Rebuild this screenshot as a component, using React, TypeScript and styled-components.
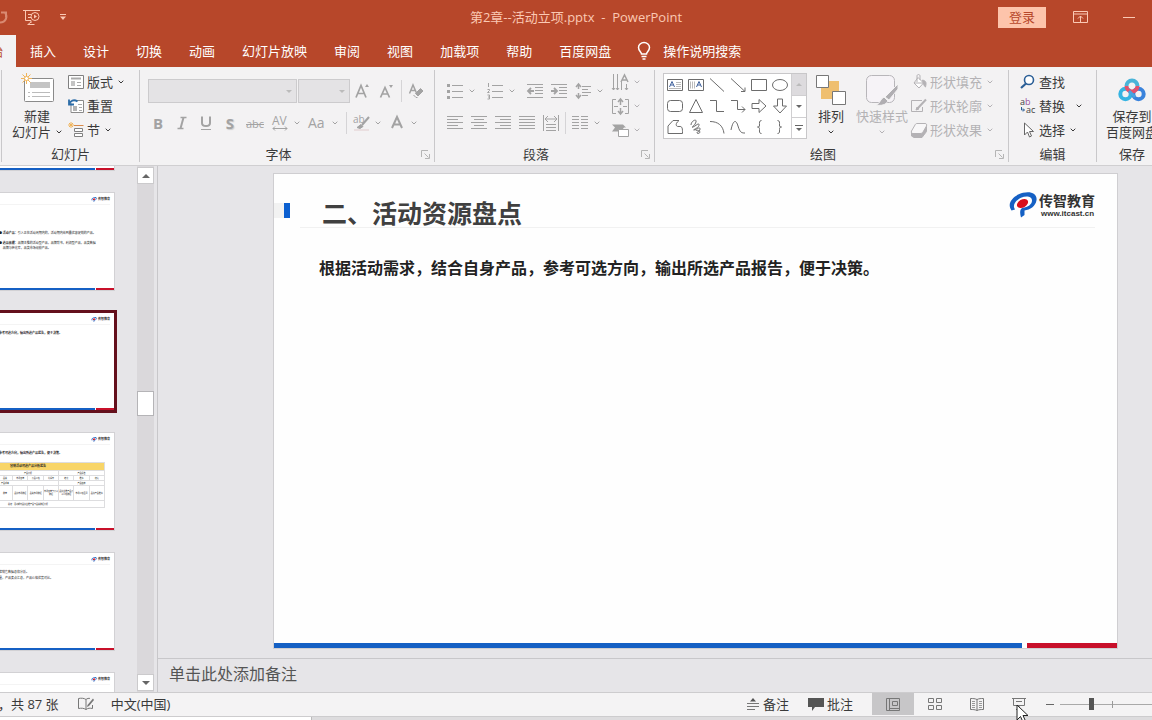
import React from 'react';
import styled, { createGlobalStyle, css } from 'styled-components';

const GlobalStyle = createGlobalStyle`
  * { box-sizing: border-box; }
  body { margin: 0; overflow: hidden; }
  button, select, textarea, input {
    font: inherit; color: inherit; border: 0; padding: 0; margin: 0;
    background: transparent; border-radius: 0; outline: 0;
  }
  svg { display: block; flex: none; overflow: visible; }
`;

const brand = '#b7472a';
const ink = '#3a3a3a';
const faded = '#a3a3a3';

const Window = styled.div`
  height: 100vh;
  display: flex;
  flex-direction: column;
  overflow: hidden;
  background: #e6e5e8;
  color: ${ink};
  font: 13px/16px "Open Sans", "Noto Sans CJK SC", sans-serif;
`;

/* ---------- title bar ---------- */

const TitleBar = styled.header`
  flex: none;
  height: 34px;
  display: grid;
  grid-template-columns: 1fr auto 1fr;
  align-items: center;
  background: ${brand};
  color: #fbc9b4;
`;
const QuickAccess = styled.div`
  display: flex;
  align-items: center;
  gap: 15px;
  margin-left: -8px;
`;
const PlainButton = styled.button`
  display: flex;
  align-items: center;
  justify-content: center;
`;
const DocumentTitle = styled.h1`
  margin: 0;
  font-size: 13px;
  font-weight: 400;
  white-space: pre;
`;
const WindowControls = styled.div`
  display: flex;
  align-items: center;
  justify-content: flex-end;
  padding-right: 15px;
`;
const LoginButton = styled.button`
  width: 48px;
  height: 21px;
  margin-right: 26px;
  background: #fdc4ab;
  color: ${brand};
`;
const WindowButton = styled(PlainButton)`
  width: 16px;
  & + & { margin-left: 33px; }
`;

/* ---------- tabs ---------- */

const TabStrip = styled.nav`
  flex: none;
  height: 33px;
  display: flex;
  gap: 1px;
  padding-top: 1px;
  margin-left: -36px;
  background: ${brand};
  color: #fff;
`;
const Tab = styled.button<{ $active?: boolean }>`
  flex: none;
  padding: 0 13px;
  white-space: nowrap;
  ${p => p.$active && css`background: #f3f2f3; color: ${brand};`}
`;
const TellMe = styled.button`
  display: flex;
  align-items: center;
  gap: 12px;
  margin-left: 12px;
  white-space: nowrap;
`;
const TabBack = styled.div`
  flex: none;
  background: ${brand};
`;

/* ---------- ribbon ---------- */

const Ribbon = styled.div`
  flex: none;
  height: 99px;
  display: flex;
  padding: 3px 0 3px 1px;
  background: #f3f2f3;
  border-bottom: 1px solid #d0cfd1;
`;
const Group = styled.section<{ $w: number }>`
  flex: none;
  width: ${p => p.$w}px;
  display: flex;
  flex-direction: column;
  border-left: 1px solid #c9c8ca;
`;
const GroupBody = styled.div<{ $pad?: number }>`
  height: 77px;
  display: flex;
  padding-left: ${p => p.$pad ?? 0}px;
`;
const GroupFoot = styled.footer`
  display: flex;
  align-items: center;
  height: 16px;
`;
const GroupName = styled.span`
  flex: 1;
  text-align: center;
`;
const Launcher = styled(PlainButton)`
  width: 17px;
  height: 16px;
`;
const BigButton = styled.button<{ $w: number; $off?: boolean }>`
  flex: none;
  width: ${p => p.$w}px;
  display: flex;
  flex-direction: column;
  align-items: center;
  padding-top: 2px;
  white-space: nowrap;
  color: ${p => (p.$off ? '#b4b2b5' : ink)};
`;
const BigIcon = styled.span`
  display: flex;
  align-items: center;
  height: 36px;
`;
const Line = styled.span`
  display: flex;
  align-items: center;
  justify-content: center;
  gap: 5px;
  height: 16px;
`;
const SmallColumn = styled.div<{ $pad?: number }>`
  flex: none;
  display: flex;
  flex-direction: column;
  align-items: flex-start;
  padding-left: ${p => p.$pad ?? 0}px;
`;
const SmallButton = styled.button<{ $off?: boolean; $wide?: boolean }>`
  display: flex;
  align-items: center;
  gap: 3px;
  height: 24px;
  white-space: nowrap;
  color: ${p => (p.$off ? '#b4b2b5' : ink)};
  & > svg:last-child:not(:first-child) { margin-left: ${p => (p.$wide ? 8 : 2)}px; }
`;
const ToolRows = styled.div`
  flex: none;
  display: flex;
  flex-direction: column;
  gap: 8px;
  padding-top: 9px;
`;
const ToolRow = styled.div<{ $outdent?: boolean }>`
  display: flex;
  align-items: center;
  height: 24px;
  margin-left: ${p => (p.$outdent ? -2 : 0)}px;
  color: ${faded};
`;
const Tool = styled.button<{ $after?: number }>`
  display: flex;
  align-items: center;
  justify-content: center;
  gap: 6px;
  min-width: 24px;
  height: 24px;
  padding: 0 4px;
  margin-right: ${p => p.$after ?? 0}px;
  color: ${faded};
  font-size: 15px;
`;
const ShadowLetter = styled.b`
  text-shadow: 1px 1px 1px #ccc;
`;
const Rule = styled.i`
  width: 1px;
  height: 22px;
  margin: 0 2px;
  background: #d5d4d6;
`;
const ComboBox = styled.span<{ $w: number }>`
  display: flex;
  align-items: center;
  width: ${p => p.$w}px;
  height: 24px;
  margin-right: 1px;
  padding-right: 4px;
  border: 1px solid #cccbcd;
  background: #e4e3e5;
  select { flex: 1; min-width: 0; height: 20px; appearance: none; }
`;
const Gallery = styled.div`
  flex: none;
  display: flex;
  width: 144px;
  height: 66px;
  margin-top: 3px;
  border: 1px solid #c8c7c9;
  background: #fff;
`;
const GalleryGrid = styled.div`
  flex: 1;
  display: grid;
  grid-template-columns: repeat(6, 1fr);
  grid-template-rows: repeat(3, 1fr);
`;
const GalleryScroll = styled.div`
  width: 15px;
  display: grid;
  grid-template-rows: repeat(3, 1fr);
  border-left: 1px solid #d0cfd1;
  button:first-child { background: #dddbde; }
  button + button { border-top: 1px solid #d0cfd1; }
`;

/* ---------- workspace ---------- */

const Workspace = styled.div`
  flex: 1;
  min-height: 0;
  display: flex;
`;
const ThumbPane = styled.aside`
  flex: none;
  width: 137px;
  display: flex;
  flex-direction: column;
  align-items: flex-end;
  gap: 23px;
  padding-right: 23px;
  overflow: hidden;
`;
const Thumb = styled.article<{ $selected?: boolean }>`
  flex: none;
  width: 172px;
  height: 97px;
  display: flex;
  flex-direction: column;
  background: #fff;
  color: #222;
  font-size: 3px;
  line-height: 5px;
  box-shadow: 0 0 0 1px #d2d1d4;
  ${p => p.$selected && css`box-shadow: 0 0 0 3px #64101c;`}
  &:first-child { margin-top: -93px; }
`;
const ThumbHead = styled.div`
  display: flex;
  align-items: flex-start;
  justify-content: flex-end;
  gap: 1px;
  height: 12px;
  margin: 0 4px 0 6px;
  padding-top: 4px;
  border-bottom: 1px solid #f4f4f4;
  font-size: 3px;
  font-weight: 700;
`;
const ThumbBody = styled.div<{ $top: number; $left: number; $bold?: boolean }>`
  flex: 1;
  padding: ${p => p.$top}px 8px 0 ${p => p.$left}px;
  font-weight: ${p => (p.$bold ? 700 : 400)};
  white-space: nowrap;
  p { margin: 0 0 5px; }
`;
const ThumbLine = styled.div`
  padding-left: 6px;
  line-height: 6px;
`;
const MiniTable = styled.table`
  width: 154px;
  margin: 6px 0 0;
  border-collapse: collapse;
  table-layout: fixed;
  font-size: 2px;
  line-height: 3px;
  font-weight: 400;
  text-align: center;
  th, td { padding: 0; height: 5px; border: 1px solid #dddddf; white-space: normal; overflow: hidden; }
  th { background: #f8d568; height: 8px; font-size: 3px; }
  tr:nth-child(5) td { height: 15px; }
  tr:nth-child(6) td { height: 7px; }
`;
const BrandBar = styled.div<{ $h: number; $gap: number }>`
  flex: none;
  display: flex;
  gap: ${p => p.$gap}px;
  height: ${p => p.$h}px;
  &::before { content: ''; flex: 748; background: #1560c4; }
  &::after { content: ''; flex: 90; background: #c8102a; }
`;
const Scrollbar = styled.div`
  flex: none;
  width: 17px;
  display: flex;
  flex-direction: column;
  padding: 1px 0;
  background: #dad8db;
`;
const ScrollButton = styled(PlainButton)`
  flex: none;
  height: 17px;
  border: 1px solid #cbcacc;
  background: #fff;
`;
const ScrollGap = styled.i<{ $grow: number }>`
  flex: ${p => p.$grow} 0 0;
`;
const ScrollThumb = styled.i`
  flex: none;
  height: 25px;
  border: 1px solid #b5b4b7;
  background: #fff;
`;
const Editor = styled.main`
  flex: 1;
  min-width: 0;
  display: flex;
  flex-direction: column;
  margin-left: 3px;
  border-left: 1px solid #c8c7ca;
`;
const Stage = styled.div`
  flex: 1;
  min-height: 0;
  display: flex;
  padding: 8px 35px 10px 116px;
`;
const Slide = styled.article`
  flex: 1;
  display: flex;
  flex-direction: column;
  background: #fefefe;
  box-shadow: 0 0 0 1px #cfced1;
`;
const SlideHead = styled.div`
  display: flex;
  align-items: flex-start;
  padding: 17px 22px 0 0;
`;
const Marker = styled.i`
  width: 16px;
  height: 15px;
  margin-top: 12px;
  border-left: 10px solid #f2f2f2;
  background: #0b5fd0;
`;
const SlideTitle = styled.h2`
  flex: 1;
  margin: 0 0 0 10px;
  padding: 5px 0 0 22px;
  font-size: 25px;
  line-height: 34px;
  font-weight: 700;
  color: #404040;
`;
const Logo = styled.div`
  display: flex;
  gap: 2px;
  padding-top: 1px;
`;
const LogoText = styled.div`
  display: flex;
  flex-direction: column;
  color: #333;
  strong { font-size: 14px; line-height: 18px; }
  small { padding-left: 2px; font: 700 8px/8px "Liberation Sans", sans-serif; }
`;
const HeadRule = styled.hr`
  height: 1px;
  width: auto;
  margin: -3px 22px 0 26px;
  border: 0;
  background: #f1f1f1;
`;
const SlideText = styled.p`
  flex: 1;
  margin: 0;
  padding: 28px 0 0 45px;
  font-size: 16px;
  line-height: 24px;
  font-weight: 700;
  color: #222;
  white-space: nowrap;
`;
const Notes = styled.textarea`
  flex: none;
  height: 34px;
  display: block;
  padding: 3px 11px;
  border-top: 1px solid #c8c7ca;
  resize: none;
  font-size: 16px;
  line-height: 24px;
  color: #555;
  overflow: hidden;
  &::placeholder { color: #555; }
`;

/* ---------- status bar ---------- */

const StatusBar = styled.footer`
  flex: none;
  height: 25px;
  display: flex;
  align-items: stretch;
  padding-bottom: 1px;
  border-top: 1px solid #cdccce;
  border-bottom: 1px solid #cdccce;
  background: #f4f3f4;
`;
const StatusText = styled.span`
  display: flex;
  align-items: center;
  white-space: pre;
  &:first-child { margin-left: -2px; }
`;
const StatusButton = styled.button`
  display: flex;
  align-items: center;
  gap: 3px;
  margin-right: 19px;
  white-space: nowrap;
`;
const ProofButton = styled(PlainButton)`
  margin: 0 17px 0 19px;
`;
const ViewButton = styled(PlainButton)<{ $active?: boolean }>`
  width: 42px;
  background: ${p => (p.$active ? '#c7c6c8' : 'transparent')};
`;
const Spacer = styled.i`
  flex: 1;
`;
const ZoomOut = styled(PlainButton)`
  width: 20px;
`;
const ZoomSlider = styled.input`
  appearance: none;
  width: 92px;
  background:
    linear-gradient(#999, #999) 52px 50% / 1px 7px no-repeat,
    linear-gradient(#a9a9a9, #a9a9a9) 0 50% / 100% 1px no-repeat;
  &::-webkit-slider-thumb {
    appearance: none;
    width: 5px;
    height: 12px;
    background: #555;
  }
`;
const Underlay = styled.div`
  flex: none;
  height: 3px;
  background: #dddcde;
  &::before {
    content: '';
    display: block;
    width: 27%;
    height: 3px;
    border-right: 1px solid #bbb;
    background: #fff;
  }
`;
const PointerHost = styled.span`
  position: relative;
  display: flex;
`;
const Pointer = styled.svg`
  position: absolute;
  left: 18px;
  top: 11px;
`;

/* ---------- icons ---------- */

type IconProps = { w?: number; h?: number; c?: string; sw?: number; children: React.ReactNode };
const Icon = ({ w = 16, h = 16, c = 'currentColor', sw = 1, children }: IconProps) => (
  <svg width={w} height={h} viewBox={`0 0 ${w} ${h}`} fill="none" stroke={c} strokeWidth={sw} aria-hidden="true">
    {children}
  </svg>
);
const Glyphs = ({ x = 0, y, size, fill = 'currentColor', children }: { x?: number; y: number; size: number; fill?: string; children: React.ReactNode }) => (
  <text x={x} y={y} fontSize={size} fill={fill} stroke="none" fontFamily="Open Sans">{children}</text>
);
const Chevron = () => (
  <Icon w={6} h={6}><path d="M.7 1.7 3 4 5.300 1.700" /></Icon>
);
const Triangle = ({ up, c = '#666', w = 8 }: { up?: boolean; c?: string; w?: number }) => (
  <svg width={w} height={w / 2} viewBox="0 0 8 4" fill={c} aria-hidden="true">
    <path d={up ? 'M0 4h8L4 0z' : 'M0 0h8L4 4z'} />
  </svg>
);
const LaunchIcon = () => (
  <Icon w={9} h={9} c="#b5b5b5"><path d="M.5 7V.5H7M3.500 3.500l4 4M8.500 4v4.500H4" /></Icon>
);
const Lines = ({ rows }: { rows: [number, number][] }) => (
  <Icon>{rows.map(([a, b], i) => <path key={i} d={`M${a} ${i * 3 + 1.5}H${b}`} />)}</Icon>
);
const LogoMark = ({ w, h }: { w: number; h: number }) => (
  <svg width={w} height={h} viewBox="0 0 29 26" aria-hidden="true">
    <path d="M3.500 18.500C-2 11 6 3 15 .8c8-2 14.500 1 13.500 7.500-1 6-6.500 9.700-12 10.200v4.500l-3.500 2.500c-1.500-5-1-8.500 1.500-9.700 5.500-.5 9.500-3.500 9.500-7.300 0-4.500-6-5-11-2.800C7.500 8.500 4 13.500 7 17.500z" fill="#1560c4" />
    <ellipse cx="14.500" cy="11.500" rx="6" ry="4" transform="rotate(-30 14.500 11.500)" fill="#d80f1c" />
  </svg>
);

const galleryShapes: { name: string; art: React.ReactNode }[] = [
  { name: '文本框', art: <><path d="M.5 2.500h15v11H.5z" /><path d="M2.500 10 5 4.500 7.500 10M3.500 8h3" stroke="#3d5f9b" /><path d="M9 5.500h5M9 7.500h5M9 9.500h5M2 11.500h12" stroke="#bbb" /></> },
  { name: '竖排文本框', art: <><path d="M.5 2.500h15v11H.5z" /><path d="M8.500 10 11 4.500 13.500 10M9.500 8h3" stroke="#3d5f9b" /><path d="M2.500 4.500v7M4.500 4.500v7M6.500 4.500v7" stroke="#bbb" /></> },
  { name: '直线', art: <path d="M1 1.500 15 14.500" /> },
  { name: '箭头', art: <path d="M1 1.500 15 14.500M15 10.500v4h-4" /> },
  { name: '矩形', art: <path d="M.5 2.500h15v11H.5z" /> },
  { name: '椭圆', art: <ellipse cx="8" cy="8" rx="7.500" ry="5.500" /> },
  { name: '圆角矩形', art: <rect x=".5" y="2.500" width="15" height="11" rx="3" /> },
  { name: '三角形', art: <path d="M8 1.500 14.500 14.500h-13z" /> },
  { name: '肘形连接符', art: <path d="M1 2.500h6.500v11H15" /> },
  { name: '肘形箭头', art: <path d="M1 2.500h6.500v9H15M12 8.500l3 3-3 3" /> },
  { name: '右箭头', art: <path d="M1 5.500h7v-4L15 8l-7 6.500v-4H1z" /> },
  { name: '下箭头', art: <path d="M5.500 1v7h-4L8 15l6.500-7h-4V1z" /> },
  { name: '任意多边形', art: <path d="M1 14.500V7l5-5.500h6C8 4.500 8.500 8 12 7.500c3.500-.5 3.500 2 3.500 7z" /> },
  { name: '自由曲线', art: <path d="M3 6c0-4 6-7 5-3S2 9 5 8s6-5 6-2-7 5-5 5 6-4 6-1-4 3-3 4 3 0 3-1-4-3-4-1" /> },
  { name: '弧形', art: <path d="M1 2.500c8 0 13 4 14 12" /> },
  { name: '曲线', art: <path d="M1 11C3 1 6 0 8 7s4 7 7 7" /> },
  { name: '左大括号', art: <path d="M10.500 1.500C8 1.500 8.500 4 8.500 6S8 8 6.500 8c1.500 0 2 .5 2 2.500s-.5 4 2 4" /> },
  { name: '右大括号', art: <path d="M5.500 1.500C8 1.500 7.500 4 7.500 6S8 8 9.500 8c-1.500 0-2 .5-2 2.500s.5 4-2 4" /> },
];

const GroupFooter = ({ name, launch }: { name: string; launch?: boolean }) => (
  <GroupFoot>
    <GroupName>{name}</GroupName>
    {launch && <Launcher aria-label={`${name}设置`}><LaunchIcon /></Launcher>}
  </GroupFoot>
);

const SlidesGroup = () => (
  <Group $w={138}>
    <GroupBody $pad={7}>
      <BigButton $w={56}>
        <BigIcon>
          <Icon w={32} h={36} c="#8a8a8a">
            <rect x="3.500" y="6.500" width="29" height="23" rx="1" fill="#fff" />
            <path d="M9 10h20v6H9z" fill="#c4c4c4" stroke="none" />
            <path d="M11 20.500h18M11 24.500h18" stroke="#bbb" /><path d="M7 20.500h2M7 24.500h2" stroke="#bbb" />
            <path d="M5.500 1v11M0 6.500h11M1.500 2.500l8 8M9.500 2.500l-8 8" stroke="#f0b45a" />
            <circle cx="5.500" cy="6.500" r="2" fill="#fff" stroke="#f0b45a" />
          </Icon>
        </BigIcon>
        <Line>新建</Line>
        <Line>幻灯片<Chevron /></Line>
      </BigButton>
      <SmallColumn $pad={3}>
        <SmallButton>
          <Icon c="#808080"><path d="M.5 1.500h15v13H.5z" fill="#fff" /><path d="M3 4.500h10" stroke="#aaa" strokeWidth="2" /><path d="M3 7h4v5H3z" fill="#c4c4c4" stroke="none" /><path d="M9 8.500h4M9 11.500h4" stroke="#aaa" /></Icon>
          版式<Chevron />
        </SmallButton>
        <SmallButton>
          <Icon c="#8a8a8a"><path d="M3 5v9.500h12.500v-12H9" fill="#fff" /><path d="M5 8h4v5H5z" fill="#b4b4b4" stroke="none" /><path d="M10 6.500h4M11 9.500h3M11 12.500h3" stroke="#aaa" /><path d="M1 1.500v5h5M1 6.500c1-4 5-5.500 8.500-3" stroke="#2c6da8" strokeWidth="1.800" /></Icon>
          重置
        </SmallButton>
        <SmallButton>
          <Icon c="#808080"><path d="M6 3.500h9.500" stroke="#d88a4a" /><path d="M6.500 6.500h8v3h-8zM6.500 11.500h8v3h-8z" fill="#fff" /><path d="M3 0v6M0 3h6M1 1l4 4M5 1 1 5" stroke="#f0b45a" /></Icon>
          节<Chevron />
        </SmallButton>
      </SmallColumn>
    </GroupBody>
    <GroupFooter name="幻灯片" />
  </Group>
);

const FontGroup = () => (
  <Group $w={295}>
    <GroupBody $pad={8}>
      <ToolRows>
        <ToolRow>
          <ComboBox $w={149}><select aria-label="字体" disabled /><Triangle c="#bbb" w={6} /></ComboBox>
          <ComboBox $w={52}><select aria-label="字号" disabled /><Triangle c="#bbb" w={6} /></ComboBox>
          <Tool aria-label="增大字号"><Icon><path d="M1 14.500 6 2.500l5 12M3 10.500h6" strokeWidth="1.700" /><path d="M10 4l2-3 2 3z" fill="currentColor" stroke="none" /></Icon></Tool>
          <Tool aria-label="减小字号"><Icon><path d="M1.500 14.500 6 4.500l4.500 10M3 11h6" strokeWidth="1.700" /><path d="M10 2l2 3 2-3z" fill="currentColor" stroke="none" /></Icon></Tool>
          <Rule />
          <Tool aria-label="清除所有格式"><Icon><path d="M1.500 10.500 5 2l3.500 8M3 7.500h4.500" strokeWidth="1.500" /><path d="M7.500 10.500l5-5 2.500 2.500-5 5z" fill="currentColor" /><path d="M5.500 12l2.500 2.500h1.500" /></Icon></Tool>
        </ToolRow>
        <ToolRow $outdent>
          <Tool aria-label="加粗"><b>B</b></Tool>
          <Tool aria-label="倾斜"><Icon><path d="M6.500 2.500h6M3.500 13.500h6" strokeWidth="1.500" /><path d="M9.500 2.500l-3 11" strokeWidth="2" /></Icon></Tool>
          <Tool aria-label="下划线"><Icon><path d="M4 1.500v6.500c0 4 8 4 8 0V1.500" strokeWidth="2" /><path d="M3 14.500h10" /></Icon></Tool>
          <Tool aria-label="阴影"><ShadowLetter>S</ShadowLetter></Tool>
          <Tool aria-label="删除线"><Icon w={18}><Glyphs y={13} size={11}>abc</Glyphs><path d="M0 9.500h18" /></Icon></Tool>
          <Tool aria-label="字符间距"><Icon><Glyphs y={10} size={12}>AV</Glyphs><path d="M1 13.500h14M3 11.500l-2 2 2 2M13 11.500l2 2-2 2" /></Icon><Chevron /></Tool>
          <Tool aria-label="更改大小写" $after={2}><Icon w={18}><Glyphs y={13} size={14}>Aa</Glyphs></Icon><Chevron /></Tool>
          <Rule />
          <Tool aria-label="文本突出显示颜色"><Icon w={16}><Glyphs y={8} size={10}>ab</Glyphs><path d="M16 2 9 10" strokeWidth="2" /><path d="M4 12.500l4-3 2 2-3 2z" fill="currentColor" /><path d="M1 15h15" stroke="#eadfe0" strokeWidth="2" /></Icon><Chevron /></Tool>
          <Tool aria-label="字体颜色"><Icon><path d="M3 13 8 2l5 11M4.800 9.500h6.500" strokeWidth="2" /></Icon><Chevron /></Tool>
        </ToolRow>
      </ToolRows>
    </GroupBody>
    <GroupFooter name="字体" launch />
  </Group>
);

const ParagraphGroup = () => (
  <Group $w={220}>
    <GroupBody $pad={8}>
      <ToolRows>
        <ToolRow>
          <Tool aria-label="项目符号" $after={4}><Icon><path d="M5 2.500h11M5 8.500h11M5 14.500h11" /><path d="M0 2.500h3M0 8.500h3M0 14.500h3" strokeWidth="3" /></Icon><Chevron /></Tool>
          <Tool aria-label="编号" $after={4}><Icon><path d="M5 2.500h11M5 8.500h11M5 14.500h11" /><path d="M1.500 0v4M.5 6.500h2v1l-2 2h2M.5 12h2v4h-2M1 14h1" /></Icon><Chevron /></Tool>
          <Tool aria-label="降低列表级别"><Icon><path d="M0 1.500h16M8 4.500h8M8 7.500h8M8 10.500h8M0 14.500h16" /><path d="M7 8H1.500M4 5 1 8l3 3" strokeWidth="1.800" /></Icon></Tool>
          <Tool aria-label="提高列表级别"><Icon><path d="M0 1.500h16M8 4.500h8M8 7.500h8M8 10.500h8M0 14.500h16" /><path d="M0 8h5.500M3 5l3 3-3 3" strokeWidth="1.800" /></Icon></Tool>
          <Tool aria-label="行距"><Icon><path d="M7 3.500h9M7 6.500h6M7 9.500h9M7 12.500h6" /><path d="M3.500 1v5M3.500 10v5M1 4l2.500-3L6 4M1 12l2.500 3L6 12" strokeWidth="1.500" /></Icon><Chevron /></Tool>
        </ToolRow>
        <ToolRow>
          <Tool aria-label="左对齐"><Lines rows={[[0, 16], [0, 11], [0, 16], [0, 11], [0, 16]]} /></Tool>
          <Tool aria-label="居中"><Lines rows={[[0, 16], [3, 13], [0, 16], [3, 13], [0, 16]]} /></Tool>
          <Tool aria-label="右对齐"><Lines rows={[[0, 16], [5, 16], [0, 16], [5, 16], [0, 16]]} /></Tool>
          <Tool aria-label="两端对齐"><Lines rows={[[0, 16], [0, 16], [0, 16], [0, 16], [0, 16]]} /></Tool>
          <Tool aria-label="分散对齐"><Icon><path d="M.5 0v16M15.500 0v16M3 9.500h10M3 12.500h10M3 15.500h10" /><path d="M2 4h12M5 1 2 4l3 3M11 1l3 3-3 3" /></Icon></Tool>
          <Rule />
          <Tool aria-label="分栏"><Icon><path d="M0 1.500h7M0 4.500h7M0 7.500h7M0 10.500h7M0 13.500h7M9 1.500h7M9 4.500h7M9 7.500h7M9 10.500h7M9 13.500h7" /></Icon><Chevron /></Tool>
        </ToolRow>
      </ToolRows>
      <SmallColumn $pad={5}>
        <SmallButton $off aria-label="文字方向"><Icon w={17} h={17} c={faded}><path d="M1.500 0v16M5.500 0v16M9.500 8v8M14.500 10v6" /><path d="M0 14l1.500 2L3 14M4 14l1.500 2L7 14M13 14l1.500 2 1.500-2" /><path d="M9 8l3.500-7L16 8M10 6h5" strokeWidth="1.500" /></Icon><Chevron /></SmallButton>
        <SmallButton $off aria-label="对齐文本"><Icon w={17} h={17} c={faded}><path d="M4 1.500H.5v14H4M13 1.500h3.500v14H13M2 8.500h4M11 8.500h4" /><path d="M8.500 1v6M8.500 10v6M6 4l2.500-3L11 4M6 13l2.500 3 2.500-3" strokeWidth="1.500" /></Icon><Chevron /></SmallButton>
        <SmallButton $off aria-label="转换为 SmartArt"><Icon w={17} h={17} c={faded}><path d="M0 2.500h11l3 3H3zM3 5.500h9l-3 4H0z" fill={faded} stroke="none" /><path d="M6.500 7.500h10v7h-10z" fill="#fff" /></Icon><Chevron /></SmallButton>
      </SmallColumn>
    </GroupBody>
    <GroupFooter name="段落" launch />
  </Group>
);

const DrawingGroup = () => (
  <Group $w={354}>
    <GroupBody $pad={8}>
      <Gallery>
        <GalleryGrid>
          {galleryShapes.map(s => (
            <PlainButton key={s.name} aria-label={s.name}><Icon c="#6c6c6c">{s.art}</Icon></PlainButton>
          ))}
        </GalleryGrid>
        <GalleryScroll>
          <PlainButton aria-label="上一行"><Triangle up c="#bbb" w={6} /></PlainButton>
          <PlainButton aria-label="下一行"><Triangle w={6} /></PlainButton>
          <PlainButton aria-label="其他形状"><Icon w={8} h={8} c="#666"><path d="M0 1.500h8" /><path d="M1 4h6L4 7z" fill="#666" stroke="none" /></Icon></PlainButton>
        </GalleryScroll>
      </Gallery>
      <BigButton $w={48}>
        <BigIcon>
          <Icon w={30} h={30} c="#777">
            <path d="M5 6h18v18H5z" fill="#efbf70" stroke="none" />
            <path d="M.5.5h12v12H.5zM16.500 16.500h13v13h-13z" fill="#fff" />
          </Icon>
        </BigIcon>
        <Line>排列</Line>
        <Line><Chevron /></Line>
      </BigButton>
      <BigButton $w={54} $off>
        <BigIcon>
          <Icon w={32} h={32} c="#b8b6ba">
            <rect x=".5" y="1.500" width="28" height="27" rx="5" fill="#f6f3f7" />
            <path d="M32 10v5l-9 11-4-3z" fill="#b0aeb2" stroke="#f3f2f3" />
            <path d="M18 23l4 4c-2 4-7 5-12 4 4-1 4-6 8-8z" fill="#b0aeb2" stroke="#f3f2f3" />
          </Icon>
        </BigIcon>
        <Line>快速样式</Line>
        <Line><Chevron /></Line>
      </BigButton>
      <SmallColumn $pad={2}>
        <SmallButton $off>
          <Icon><path d="M7 3.500 12.500 9 8 14 3 9z" fill="#fff" /><path d="M6 8V2c0-2 3-2 3 0v4M3 9h9" /><path d="M11.500 6c4 1 4 3 3 7-2-1-2-4-3-7z" fill="currentColor" /></Icon>
          形状填充<Chevron />
        </SmallButton>
        <SmallButton $off>
          <Icon><path d="M11 2.500H.5v11h11V9" /><path d="M15 1.500 7 10" strokeWidth="2" /><path d="M5 12l1-3 2 2z" fill="currentColor" /></Icon>
          形状轮廓<Chevron />
        </SmallButton>
        <SmallButton $off>
          <Icon><path d="M.5 11v3l2.500 1.500h8l4.500-6V4L11 11z" fill="currentColor" /><path d="M6 1.500h8c1.500 0 2 1 1.500 2.500L12 10c-.5 1-1.500 1.500-3 1.500H2C.5 11.500 0 10.500.5 9L4 3c.5-1 1-1.500 2-1.500z" fill="#f8f7f8" /></Icon>
          形状效果<Chevron />
        </SmallButton>
      </SmallColumn>
    </GroupBody>
    <GroupFooter name="绘图" launch />
  </Group>
);

const EditingGroup = () => (
  <Group $w={88}>
    <GroupBody $pad={11}>
      <SmallColumn>
        <SmallButton>
          <Icon c="#2b5f97"><circle cx="9" cy="6" r="4.500" strokeWidth="1.600" fill="#fff" /><path d="M6 9.500 1 14" strokeWidth="2.200" /></Icon>
          查找
        </SmallButton>
        <SmallButton $wide>
          <Icon c="none"><Glyphs y={7} size={9} fill="#444">a</Glyphs><Glyphs x={5} y={7} size={9} fill="#9a4fa0">b</Glyphs><Glyphs x={6} y={15} size={9} fill="#444">ac</Glyphs><path d="M1.500 9v3H4M3 10.500 4.500 12 3 13.500" stroke="#2b5f97" /></Icon>
          替换<Chevron />
        </SmallButton>
        <SmallButton>
          <Icon c="#666"><path d="M4.500 1v12l3-3 2 5 2-1-2-4.500h4z" fill="#fff" /></Icon>
          选择<Chevron />
        </SmallButton>
      </SmallColumn>
    </GroupBody>
    <GroupFooter name="编辑" />
  </Group>
);

const SaveGroup = () => (
  <Group $w={71}>
    <GroupBody $pad={8}>
      <BigButton $w={54}>
        <BigIcon>
          <Icon w={28} h={26} sw={4}>
            <circle cx="7.500" cy="17" r="5.200" stroke="#35b4e2" />
            <circle cx="20.500" cy="17" r="5.200" stroke="#3a83dc" />
            <path d="M8.500 9a5.500 5.500 0 0 1 11 0" stroke="#4ab4d8" />
            <path d="M8.500 9a5.500 5.500 0 0 0 11 0" stroke="#e4526c" />
            <path d="M11 14l6 6" stroke="#4aa3e0" strokeWidth="3" />
          </Icon>
        </BigIcon>
        <Line>保存到</Line>
        <Line>百度网盘</Line>
      </BigButton>
    </GroupBody>
    <GroupFooter name="保存" />
  </Group>
);

const ThumbTop = () => (
  <ThumbHead><LogoMark w={6} h={5} /><span>传智教育</span></ThumbHead>
);

const tabs = ['开始', '插入', '设计', '切换', '动画', '幻灯片放映', '审阅', '视图', '加载项', '帮助', '百度网盘'];
const sentence = '根据活动需求，结合自身产品，参考可选方向，输出所选产品报告，便于决策。';

export default function App() {
  return (
    <Window>
      <GlobalStyle />
      <TitleBar>
        <QuickAccess>
          <PlainButton aria-label="重复"><Icon c="#d98a72" sw={2}><path d="M13 3.500c3 4 1 10-5 10M9 3.500h5V8" /></Icon></PlainButton>
          <PlainButton aria-label="从头开始放映">
            <Icon w={17} h={16}><path d="M0 1.500h17M2.500 2v9.500H8M5 5.500h4M5 8.500h3M8 11.500V14M4.500 15.500h7M8 13l-3 2.500" /><circle cx="12" cy="7.500" r="4" fill={brand} /><path d="M11 5.500v4l3-2z" fill="currentColor" stroke="none" /></Icon>
          </PlainButton>
          <PlainButton aria-label="自定义快速访问工具栏">
            <Icon w={16} h={8}><path d="M5 1.500h6" /><path d="M5 3.500h6L8 7z" fill="currentColor" stroke="none" /></Icon>
          </PlainButton>
        </QuickAccess>
        <DocumentTitle>第2章--活动立项.pptx  -  PowerPoint</DocumentTitle>
        <WindowControls>
          <LoginButton>登录</LoginButton>
          <WindowButton aria-label="功能区显示选项">
            <Icon w={15} h={12}><path d="M.5.5h14v11H.5zM.5 3h14M7.500 11V5M5 7.500 7.500 5 10 7.500" /></Icon>
          </WindowButton>
          <WindowButton aria-label="最小化"><Icon w={12} h={3}><path d="M0 1.500h12" /></Icon></WindowButton>
        </WindowControls>
      </TitleBar>
      <TabBack>
        <TabStrip>
          {tabs.map((t, i) => <Tab key={t} $active={i === 0}>{t}</Tab>)}
          <TellMe>
            <Icon w={14} h={18} sw={1.5}><path d="M4.500 12c0-2-3-3-3-6.500a5.500 5 0 0 1 11 0c0 3.500-3 4.500-3 6.500zM4.500 14.500h5M5.500 17h3" /></Icon>
            操作说明搜索
          </TellMe>
        </TabStrip>
      </TabBack>
      <Ribbon>
        <SlidesGroup />
        <FontGroup />
        <ParagraphGroup />
        <DrawingGroup />
        <EditingGroup />
        <SaveGroup />
      </Ribbon>
      <Workspace>
        <ThumbPane>
          <Thumb><ThumbBody $top={0} $left={0} /><BrandBar $h={2} $gap={1} /></Thumb>
          <Thumb>
            <ThumbTop />
            <ThumbBody $top={26} $left={57}>
              <p>● <b>活动产品：</b>引入正在活动周期内的，活动期内给到最优惠促销的产品。</p>
              <p>● <b>选品依据：</b>品牌主推的活动型产品，品牌背书，利润型产品，品类数据<br />　 品牌与转化率，品类市场规模产品。</p>
            </ThumbBody>
            <BrandBar $h={2} $gap={1} />
          </Thumb>
          <Thumb $selected>
            <ThumbTop />
            <ThumbBody $top={5} $left={9} $bold>
              <ThumbLine>{sentence}</ThumbLine>
            </ThumbBody>
            <BrandBar $h={2} $gap={1} />
          </Thumb>
          <Thumb>
            <ThumbTop />
            <ThumbBody $top={5} $left={9} $bold>
              <ThumbLine>{sentence}</ThumbLine>
              <MiniTable>
                <tbody>
                  <tr><th colSpan={10}>营销活动可选产品分析报告</th></tr>
                  <tr><td colSpan={3} /><td colSpan={4}>产品分析</td><td colSpan={3}>产品报告</td></tr>
                  <tr><td /><td /><td>产品</td><td>品类</td><td>市场容量</td><td>竞品价格</td><td>利润率</td><td>转化</td><td>推荐</td><td>结论</td></tr>
                  <tr><td colSpan={7}>产品成本</td><td colSpan={3}>产品趋势</td></tr>
                  <tr><td /><td /><td>品类数据</td><td>数量</td><td>品牌市场数据</td><td>品类市场数据</td><td>市场容量与竞争数据</td><td>品牌主推产品竞争价格数据</td><td>市场价格区间</td><td>品牌产品推荐</td></tr>
                  <tr><td colSpan={10}>总结：活动期内品牌主推产品与品类数据分析</td></tr>
                </tbody>
              </MiniTable>
            </ThumbBody>
            <BrandBar $h={2} $gap={1} />
          </Thumb>
          <Thumb>
            <ThumbTop />
            <ThumbBody $top={4} $left={36}>
              <ThumbLine>品牌店铺日常销售数据总和分析。</ThumbLine>
              <ThumbLine>活动选品数量，产品卖点汇总，产品价格优势对比。</ThumbLine>
            </ThumbBody>
            <BrandBar $h={2} $gap={1} />
          </Thumb>
          <Thumb><ThumbTop /></Thumb>
        </ThumbPane>
        <Scrollbar>
          <ScrollButton aria-label="向上滚动"><Triangle up /></ScrollButton>
          <ScrollGap $grow={207} />
          <ScrollThumb />
          <ScrollGap $grow={259} />
          <ScrollButton aria-label="向下滚动"><Triangle /></ScrollButton>
        </Scrollbar>
        <Editor>
          <Stage>
            <Slide>
              <SlideHead>
                <Marker />
                <SlideTitle>二、活动资源盘点</SlideTitle>
                <Logo>
                  <LogoMark w={29} h={26} />
                  <LogoText><strong>传智教育</strong><small>www.itcast.cn</small></LogoText>
                </Logo>
              </SlideHead>
              <HeadRule />
              <SlideText>{sentence}</SlideText>
              <BrandBar $h={5} $gap={5} />
            </Slide>
          </Stage>
          <Notes aria-label="备注" placeholder="单击此处添加备注" />
        </Editor>
      </Workspace>
      <StatusBar>
        <StatusText>，共 87 张</StatusText>
        <ProofButton aria-label="拼写检查">
          <Icon c="#777"><path d="M8 3.500C6 2 3 2 .5 2.500v10c3-.5 5-.5 7.500 1 2-1.500 4-1.500 6.500-1V9M8 3.500v10M8 3.500c1-1 3-1.500 4-1" /><path d="M15 2.500 9.500 9l-.5 2 2-1 5-6z" fill="#777" stroke="none" /></Icon>
        </ProofButton>
        <StatusText>中文(中国)</StatusText>
        <Spacer />
        <StatusButton>
          <Icon w={14} h={14} c="#777"><path d="M1 6.500h12M1 9.500h12M1 12.500h8" /><path d="M4 4.500h6L7 1z" fill="#555" stroke="none" /></Icon>
          备注
        </StatusButton>
        <StatusButton>
          <Icon w={16} h={14}><path d="M0 1h16v9H7l-3 4v-4H0z" fill="#555" stroke="none" /></Icon>
          批注
        </StatusButton>
        <ViewButton $active aria-label="普通视图"><Icon w={14} h={13} c="#777"><path d="M.5.5h13v12H.5zM3.500.5v12M6.500 3.500h5v4h-5zM3.500 10.500h10" /></Icon></ViewButton>
        <ViewButton aria-label="幻灯片浏览"><Icon w={14} h={13} c="#777"><path d="M.5.500h5v4h-5zM8.500.5h5v4h-5zM.5 7.500h5v4h-5zM8.500 7.500h5v4h-5z" /></Icon></ViewButton>
        <ViewButton aria-label="阅读视图"><Icon w={14} h={13} c="#777"><path d="M7 1.500C5 .5 3 .5.5.5v11c2.500 0 4.500 0 6.500 1 2-1 4-1 6.500-1V.5C11 .5 9 .5 7 1.500zv11" /><path d="M2 3.500h3M2 5.500h3M2 7.500h3M2 9.500h3M9 3.500h3M9 5.500h3M9 7.500h3M9 9.500h3" stroke="#999" /></Icon></ViewButton>
        <PointerHost>
          <ViewButton aria-label="幻灯片放映">
            <Icon w={14} h={14} c="#777"><path d="M0 1.500h14M1.500 2v6.500h11V2M4 4.500h6M7 8.500v3M4 12.500h6" /></Icon>
          </ViewButton>
          <Pointer width="14" height="20" viewBox="0 0 14 20" fill="#fff" stroke="#222" aria-hidden="true">
            <path d="M1 1v15l3.500-3.500L7 18l2.500-1L7 11.500h5z" />
          </Pointer>
        </PointerHost>
        <ZoomOut aria-label="缩小"><Icon w={8} h={3} c="#666"><path d="M0 1.500h8" /></Icon></ZoomOut>
        <ZoomSlider type="range" aria-label="显示比例" min={0} max={100} defaultValue={33} />
      </StatusBar>
      <Underlay />
    </Window>
  );
}
